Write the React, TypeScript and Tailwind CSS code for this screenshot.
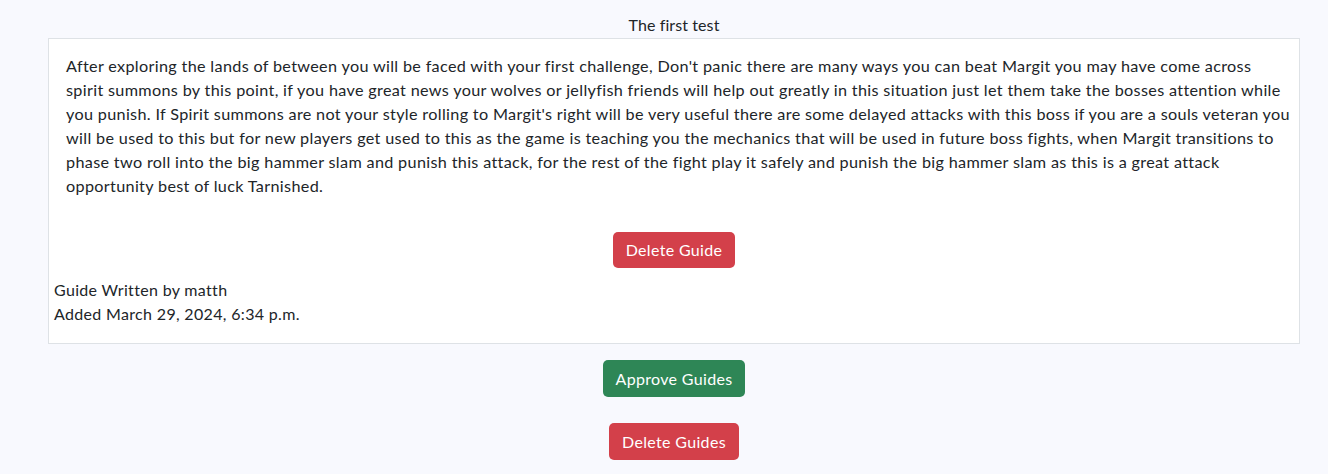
const GUIDE_LINES = [
  "After exploring the lands of between you will be faced with your first challenge, Don't panic there are many ways you can beat Margit you may have come across",
  'spirit summons by this point, if you have great news your wolves or jellyfish friends will help out greatly in this situation just let them take the bosses attention while',
  "you punish. If Spirit summons are not your style rolling to Margit's right will be very useful there are some delayed attacks with this boss if you are a souls veteran you",
  'will be used to this but for new players get used to this as the game is teaching you the mechanics that will be used in future boss fights, when Margit transitions to',
  'phase two roll into the big hammer slam and punish this attack, for the rest of the fight play it safely and punish the big hammer slam as this is a great attack',
  'opportunity best of luck Tarnished.'
]

export default function App() {
  const font = { fontFamily: 'Lato, "Open Sans", sans-serif' }
  return (
    <div className="min-h-[474px] bg-[#f8f9fe] text-[#212529] tracking-[0.33px]" style={font}>
      <div className="ml-[48px] w-[1252px] flex flex-col items-center">
        {/* Title */}
        <h1 className="text-[16px] leading-[24px] pt-[13px] pb-[1px] font-normal tracking-[0.1px]">The first test</h1>

        {/* Guide card */}
        <div className="w-full bg-white border border-[#dee2e6] px-[5px] pt-[15px] pb-[17px]">
          <p className="px-[12px] text-[16.2px] leading-[24px]">
            {GUIDE_LINES.map((line, idx) => (
              <span key={idx} className="block whitespace-nowrap">{line}</span>
            ))}
          </p>
          <div className="flex justify-center mt-[34px] mb-[10px]">
            <button className="h-[36px] px-[13px] rounded-[5px] bg-[#d3404a] text-white text-[16px]">
              Delete Guide
            </button>
          </div>
          <p className="text-[16px] leading-[24px]">Guide Written by matth</p>
          <p className="text-[16px] leading-[24px]">Added March 29, 2024, 6:34 p.m.</p>
        </div>

        {/* Admin actions */}
        <button className="mt-[16px] h-[37px] px-[13px] rounded-[5px] bg-[#2e8656] text-white text-[16px]">
          Approve Guides
        </button>
        <button className="mt-[26px] h-[37px] px-[13px] rounded-[5px] bg-[#d3404a] text-white text-[16px]">
          Delete Guides
        </button>
      </div>
    </div>
  )
}
